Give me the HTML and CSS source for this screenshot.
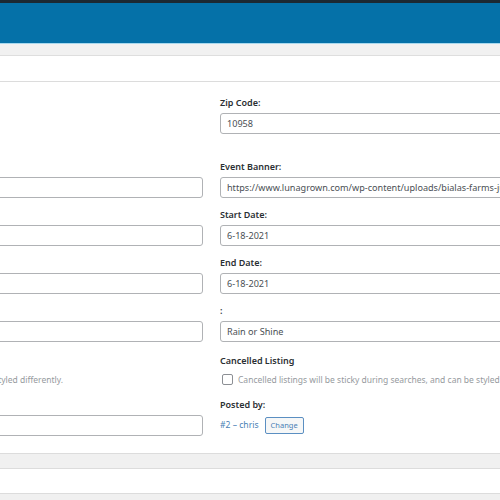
FILE: index.html
```html
<!DOCTYPE html>
<html>
<head>
<meta charset="utf-8">
<link rel="stylesheet" href="styles.css">
</head>
<body>
<div class="adminbar"></div>
<header class="topbar"></header>
<div class="tabs"></div>
<div class="titlebar"></div>
<main class="form">
  <div class="field first">
    <label class="lbl">State:</label>
    <input class="inp short" type="text" value="">
  </div>
  <div class="field first">
    <label class="lbl">Zip Code:</label>
    <input class="inp" type="text" value="10958">
  </div>

  <div class="field">
    <label class="lbl">Event Website:</label>
    <input class="inp" type="text" value="">
  </div>
  <div class="field">
    <label class="lbl">Event Banner:</label>
    <input class="inp" type="text" value="https://www.lunagrown.com/wp-content/uploads/bialas-farms-july-2021.jpg">
  </div>

  <div class="field">
    <label class="lbl">Contact Email:</label>
    <input class="inp" type="text" value="">
  </div>
  <div class="field">
    <label class="lbl">Start Date:</label>
    <input class="inp" type="text" value="6-18-2021">
  </div>

  <div class="field">
    <label class="lbl">Contact Phone:</label>
    <input class="inp" type="text" value="">
  </div>
  <div class="field">
    <label class="lbl">End Date:</label>
    <input class="inp" type="text" value="6-18-2021">
  </div>

  <div class="field">
    <label class="lbl">Price:</label>
    <input class="inp" type="text" value="">
  </div>
  <div class="field">
    <label class="lbl">:</label>
    <input class="inp" type="text" value="Rain or Shine">
  </div>

  <div class="field check-row">
    <label class="lbl">Featured Listing</label>
    <div class="check">
      <span class="box"></span>
      <span class="desc">Featured listings will be sticky during searches, and can be styled differently.</span>
    </div>
  </div>
  <div class="field check-row">
    <label class="lbl">Cancelled Listing</label>
    <div class="check">
      <span class="box"></span>
      <span class="desc">Cancelled listings will be sticky during searches, and can be styled differently.</span>
    </div>
  </div>

  <div class="field">
    <label class="lbl">Event Organizer:</label>
    <input class="inp" type="text" value="">
  </div>
  <div class="field">
    <label class="lbl">Posted by:</label>
    <div class="posted">
      <a class="author" href="#">#2 – chris</a>
      <button class="change" type="button">Change</button>
    </div>
  </div>
</main>
<div class="band"></div>
<div class="panel"></div>
<div class="band bottom"></div>
</body>
</html>
```

FILE: styles.css
```css
html, body {
  margin: 0;
  padding: 0;
  overflow: hidden;
  background: #ffffff;
  width: 500px;
  height: 500px;
}
body {
  font-family: "Noto Sans", "Open Sans", sans-serif;
  color: #1d2327;
}
.adminbar {
  height: 3px;
  background: #1c2932;
}
.topbar {
  height: 40px;
  background: #0571a8;
  border-bottom: 1px solid #a9d9ee;
}
.tabs {
  height: 11px;
  background: #f1f1f1;
  border-bottom: 1px solid #dedede;
}
.titlebar {
  height: 25px;
  background: #ffffff;
  border-bottom: 1px solid #dcdcdc;
}
.form {
  display: grid;
  grid-template-columns: 462px 462px;
  column-gap: 17px;
  margin-left: -259px;
  width: 941px;
  padding-top: 15px;
  padding-bottom: 6px;
}
.field {
  display: flex;
  flex-direction: column;
  align-items: flex-start;
  margin-bottom: 11px;
}
.field.first {
  margin-bottom: 27px;
}
.lbl {
  display: block;
  font-size: 9px;
  font-weight: 600;
  line-height: 12px;
  height: 12px;
  margin-bottom: 4px;
  color: #2a2f33;
  white-space: nowrap;
}
.inp {
  box-sizing: border-box;
  width: 100%;
  height: 21px;
  margin: 0;
  padding: 0 6px;
  border: 1px solid #b0b2b5;
  border-radius: 3px;
  background: #ffffff;
  font-family: "Noto Sans", "Open Sans", sans-serif;
  font-size: 9.1px;
  color: #4a4f54;
  outline: none;
}
.inp.short {
  width: 150px;
}
.check-row {
  margin-top: 2px;
  margin-bottom: 13px;
}
.check-row .lbl {
  margin-bottom: 5px;
}
.check {
  display: flex;
  align-items: center;
  gap: 5px;
  height: 14px;
  white-space: nowrap;
}
.box {
  box-sizing: border-box;
  width: 11px;
  height: 11px;
  margin-left: 2px;
  border: 1px solid #8c8f94;
  border-radius: 2px;
  background: #fff;
}
.desc {
  font-size: 8.5px;
  color: #969a9e;
}
.posted {
  display: flex;
  align-items: center;
  gap: 6px;
  height: 20px;
}
.author {
  font-size: 8.6px;
  color: #4a7fb5;
  text-decoration: none;
}
.change {
  box-sizing: border-box;
  height: 17px;
  padding: 0 5px;
  border: 1px solid #5b8fc2;
  border-radius: 2px;
  background: #f6f7f7;
  color: #4a7fb5;
  font-family: "Noto Sans", "Open Sans", sans-serif;
  font-size: 7.5px;
  line-height: 15px;
}
.band {
  height: 14px;
  background: #f0f0f0;
  border-top: 1px solid #dcdcdc;
  border-bottom: 1px solid #dcdcdc;
}
.panel {
  height: 24px;
  background: #ffffff;
}
.band.bottom {
  height: 20px;
  border-bottom: none;
}
```
